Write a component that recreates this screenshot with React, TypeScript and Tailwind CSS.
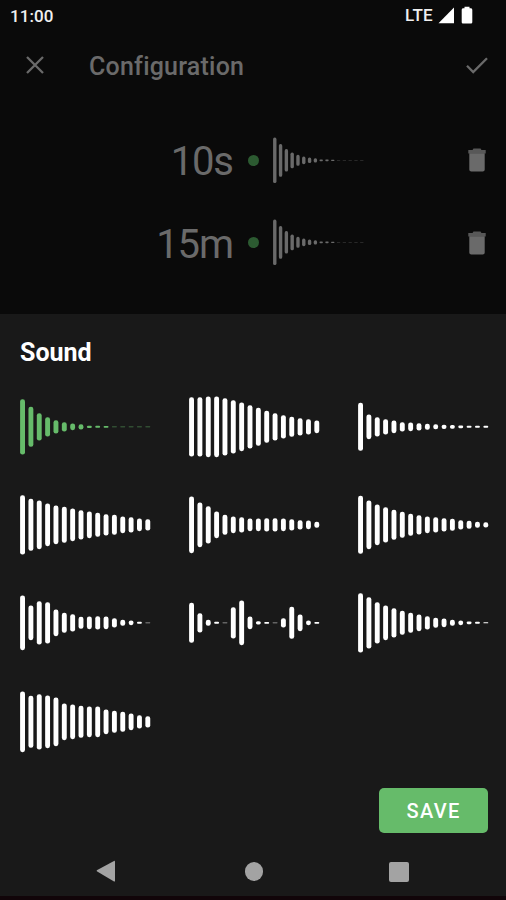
const FONT = "font-['Roboto','Liberation_Sans',sans-serif]";

// Bar heights of each sound, on a scale where 3 units are one pixel.
const SOUNDS: number[][] = [
  [166, 120, 82, 58, 40, 28, 20, 16, 7, 6, 5, 2, 2, 2, 2, 2],
  [178, 178, 182, 182, 172, 160, 146, 130, 114, 96, 82, 70, 60, 52, 46, 38],
  [144, 74, 58, 46, 38, 28, 26, 22, 18, 15, 13, 11, 8, 6, 6, 6],
  [178, 156, 146, 128, 116, 108, 98, 88, 80, 72, 64, 60, 50, 46, 38, 34],
  [170, 134, 112, 80, 60, 50, 46, 38, 38, 40, 40, 38, 34, 28, 26, 18],
  [174, 146, 122, 106, 90, 78, 66, 58, 50, 46, 40, 36, 28, 24, 18, 16],
  [164, 104, 130, 124, 80, 60, 52, 36, 38, 40, 38, 28, 18, 14, 6, 2],
  [120, 58, 18, 6, 2, 94, 134, 38, 10, 5, 2, 28, 96, 50, 14, 5],
  [178, 154, 124, 104, 88, 72, 60, 50, 40, 30, 26, 18, 14, 8, 6, 3],
  [182, 156, 166, 158, 146, 110, 104, 96, 92, 92, 74, 66, 60, 50, 40, 34],
];

function Wave({ bars, className, width, height }: { bars: number[]; className: string; width: number; height: number }) {
  return (
    <svg className={className} width={width} height={height} viewBox="0 0 131 62" preserveAspectRatio="none" fill="currentColor">
      {bars.map((units, i) => {
        const h = units / 3;
        return (
          <rect
            key={i}
            x={0.1 + i * 8.35}
            y={30.8 - h / 2}
            width={4.9}
            height={h}
            rx={Math.min(2.3, h / 2)}
            opacity={units <= 2 ? 0.65 : 1}
          />
        );
      })}
    </svg>
  );
}

function Trash() {
  return (
    <svg className="mr-5 text-[#6a6a6a]" width="18" height="24" viewBox="0 0 18 24" fill="currentColor">
      <path d="M5.5 0.5h7l1 1.5h4.2v3.4H0.3V2h4.2z" opacity="0.82" />
      <path d="M1.3 5.2h15.4v16.2c0 1.2-0.8 2-2 2H3.3c-1.2 0-2-0.8-2-2z" />
    </svg>
  );
}

function TimerRow({ label }: { label: string }) {
  return (
    <div className="flex h-[82.6px] items-center text-[#6a6a6a]">
      <div className="w-[232.8px] pt-[4px] text-right text-[40px] leading-none tracking-[-1.2px]">{label}</div>
      <div className="ml-[15.2px] size-[11px] rounded-full bg-[#2c5a31]" />
      <Wave bars={SOUNDS[0]} className="ml-[14.2px]" width={91} height={51} />
      <div className="grow" />
      <Trash />
    </div>
  );
}

export default function App() {
  return (
    <div className={`flex h-[900px] w-[506px] flex-col overflow-hidden bg-[#0a0a0a] ${FONT}`}>
      <div className="flex h-8 shrink-0 items-center pl-[10px] pr-[33px] text-[16.5px] font-medium text-[#f0f0f0]">
        <span className="pt-px text-[17px] tracking-[0.1px]">11:00</span>
        <span className="ml-auto text-[17px] tracking-[0.3px]">LTE</span>
        <svg className="ml-[4.5px] -mt-px" width="17" height="17" viewBox="0 0 17 17" fill="#fff">
          <path d="M0.5 16.2L16 0.5v15.7z" />
        </svg>
        <svg className="ml-[6.5px] -mt-[2px]" width="12" height="18" viewBox="0 0 12 18" fill="#fff">
          <path d="M3.5 0.8h5v1.5h1.2c0.9 0 1.6 0.7 1.6 1.6v12c0 0.9-0.7 1.6-1.6 1.6H2.3c-0.9 0-1.6-0.7-1.6-1.6v-12c0-0.9 0.7-1.6 1.6-1.6h1.2z" />
        </svg>
      </div>
      <div className="flex h-[66px] shrink-0 items-center pl-[26px] pr-[18px] text-[#6a6a6a]">
        <svg width="18" height="18" viewBox="0 0 18 18" fill="none" stroke="currentColor" strokeWidth="2.3">
          <path d="M1 1l16 16M17 1L1 17" />
        </svg>
        <h1 className="ml-[45px] pt-[2px] text-[25px] font-medium leading-none tracking-[0.22px]">Configuration</h1>
        <svg className="ml-auto" width="22" height="17" viewBox="0 0 22 17" fill="none" stroke="currentColor" strokeWidth="2.3">
          <path d="M1 8.8l6.2 6.2L21 1.2" />
        </svg>
      </div>
      <div className="h-[216px] shrink-0 pt-[21px]">
        <TimerRow label="10s" />
        <TimerRow label="15m" />
      </div>
      <section className="flex grow flex-col bg-[#191919]">
        <h2 className="ml-5 mt-[26px] text-[25px] font-bold leading-none text-white">Sound</h2>
        <div className="ml-[19.6px] mt-[30.7px] grid grid-cols-[169px_169px_131px] auto-rows-[62px] gap-y-[36.3px]">
          {SOUNDS.map((bars, i) => (
            <Wave key={i} bars={bars} width={131} height={62} className={i === 0 ? "text-[#66bb6a]" : "text-white"} />
          ))}
        </div>
        <div className="mt-auto flex justify-end pr-[18.5px]">
          <button className="h-[45.5px] w-[109px] rounded-[5px] bg-[#66bb6a] pl-[1px] pt-[2px] text-[20px] font-medium tracking-[1.3px] text-white">SAVE</button>
        </div>
        <nav className="mt-[15px] mb-px flex h-[47px] items-center pl-[96px] text-[#a3a3a3]">
          <svg width="20" height="23" viewBox="0 0 20 23" fill="currentColor">
            <path d="M0.8 11.2a0.9 0.9 0 0 1 0-0.9L18 0.9c0.5-0.2 1 0 1 0.6v19.4c0 0.6-0.5 0.8-1 0.6z" />
          </svg>
          <div className="ml-[128.5px] size-[18.5px] rounded-full bg-current" />
          <div className="ml-[126px] size-5 rounded-[2px] bg-current" />
        </nav>
        <div className="h-[4px] bg-[#110509]" />
      </section>
    </div>
  );
}
